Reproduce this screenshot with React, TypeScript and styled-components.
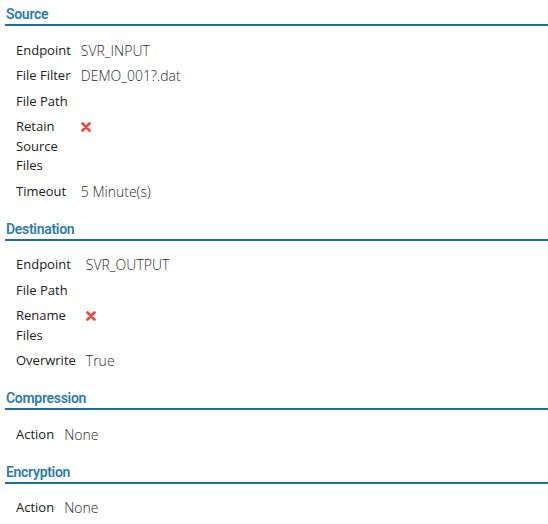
import React from 'react'
import styled, { createGlobalStyle } from 'styled-components'

type Value = string | boolean | null

interface Field {
  label: string
  value: Value
}

interface Section {
  title: string
  fields: Field[]
}

const sections: Section[] = [
  {
    title: 'Source',
    fields: [
      { label: 'Endpoint', value: 'SVR_INPUT' },
      { label: 'File Filter', value: 'DEMO_001?.dat' },
      { label: 'File Path', value: null },
      { label: 'Retain Source Files', value: false },
      { label: 'Timeout', value: '5 Minute(s)' },
    ],
  },
  {
    title: 'Destination',
    fields: [
      { label: 'Endpoint', value: 'SVR_OUTPUT' },
      { label: 'File Path', value: null },
      { label: 'Rename Files', value: false },
      { label: 'Overwrite', value: 'True' },
    ],
  },
  {
    title: 'Compression',
    fields: [{ label: 'Action', value: 'None' }],
  },
  {
    title: 'Encryption',
    fields: [{ label: 'Action', value: 'None' }],
  },
]

const CrossIcon = () => (
  <svg width="10" height="10" viewBox="0 0 10 10">
    <path d="M1.5 1.5 L8.5 8.5 M8.5 1.5 L1.5 8.5" stroke="#f2443c" strokeWidth="2.6" strokeLinecap="round" />
  </svg>
)

const renderValue = (value: Value) => {
  if (value === false) return <IconCell><CrossIcon /></IconCell>
  if (value === null) return <span />
  return <span>{value}</span>
}

const App = () => {
  return (
    <>
      <GlobalStyle />
      <Page>
        {sections.map((section) => (
          <SectionBlock key={section.title}>
            <SectionTitle>{section.title}</SectionTitle>
            <FieldGrid>
              {section.fields.map((field) => (
                <React.Fragment key={field.label}>
                  <Label>{field.label}</Label>
                  <FieldValue>{renderValue(field.value)}</FieldValue>
                </React.Fragment>
              ))}
            </FieldGrid>
          </SectionBlock>
        ))}
      </Page>
    </>
  )
}

export default App

const GlobalStyle = createGlobalStyle`
  body {
    margin: 0;
    background: #fff;
    font-family: "Open Sans", "Liberation Sans", sans-serif;
  }
`

const Page = styled.div`
  padding: 4px 0 0 5px;
  display: flex;
  flex-direction: column;
  gap: 17.5px;
`

const SectionBlock = styled.section`
  display: flex;
  flex-direction: column;
  gap: 14.5px;
`

const SectionTitle = styled.h3`
  margin: 0;
  padding-left: 1px;
  font-family: Roboto, "Liberation Sans", sans-serif;
  font-weight: 600;
  font-size: 14px;
  line-height: 20px;
  letter-spacing: -0.3px;
  color: #2b7bb1;
  border-bottom: 2px solid #1d6f98;
`

const FieldGrid = styled.div`
  display: grid;
  grid-template-columns: min-content 1fr;
  column-gap: 10px;
  row-gap: 6px;
  padding-left: 11px;
`

const Label = styled.div`
  font-size: 13px;
  line-height: 19.5px;
  color: #222;
`

const FieldValue = styled.div`
  font-size: 14px;
  line-height: 19.5px;
  font-weight: 300;
  color: #2a2a2a;
`

const IconCell = styled.span`
  display: inline-flex;
  padding-top: 2px;
`
